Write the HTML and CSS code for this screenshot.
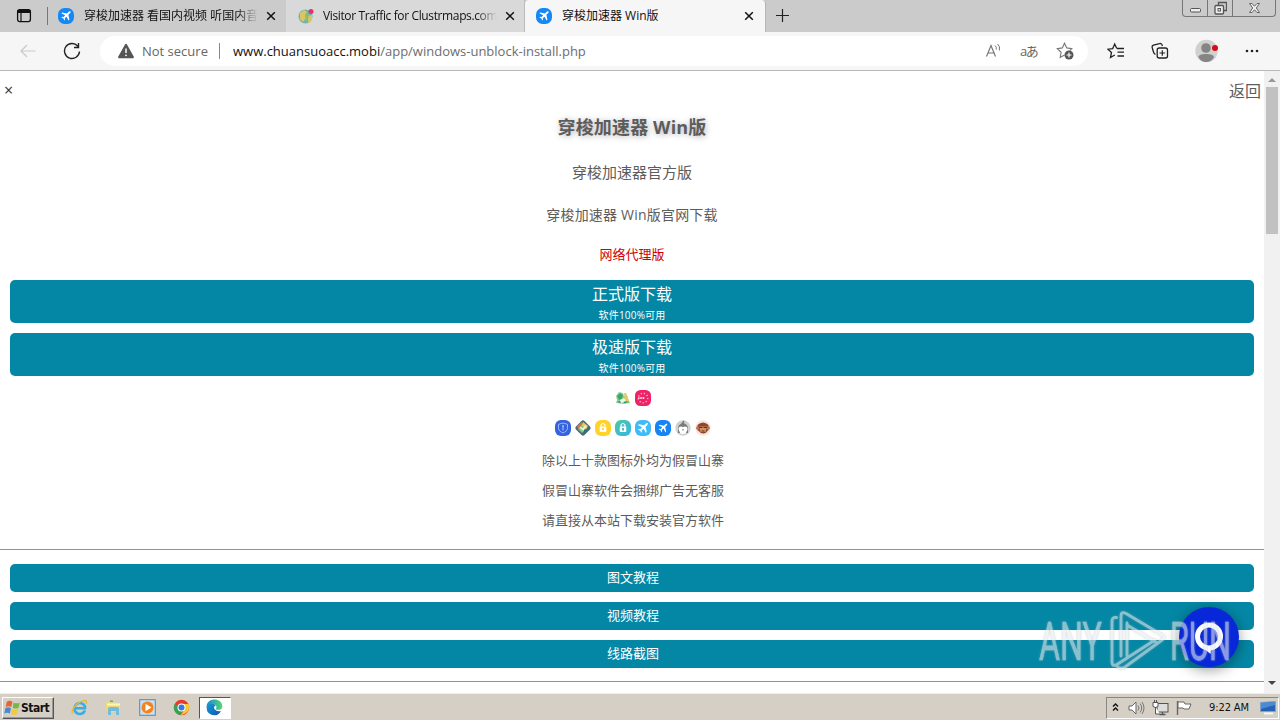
FILE: index.html
```html
<!DOCTYPE html>
<html lang="zh-CN">
  <head>
    <meta charset="UTF-8" />
    <meta name="viewport" content="width=device-width, initial-scale=1.0" />
    <title>穿梭加速器 Win版</title>
    <link rel="stylesheet" href="styles.css">
  </head>
  <body>
    <!-- Gradients and icons used more than once -->
    <svg class="defs" width="0" height="0">
      <defs>
        <linearGradient id="edge-blue" x1="0" y1="0" x2="1" y2="1">
          <stop offset="0" stop-color="#189bd8" />
          <stop offset="1" stop-color="#0b58ad" />
        </linearGradient>
        <linearGradient id="edge-top" x1="0" y1="0" x2="1" y2="0">
          <stop offset="0" stop-color="#1789d6" />
          <stop offset="1" stop-color="#55d76f" />
        </linearGradient>
        <linearGradient id="lock-teal" x1="0" y1="0" x2="1" y2="1">
          <stop offset="0" stop-color="#4cc7a0" />
          <stop offset="1" stop-color="#35b5ee" />
        </linearGradient>
        <symbol id="plane" viewBox="0 0 16 16">
          <path d="M13.6 2.4c-1-.5-2 .1-2.8.9L9.200 4.900 3.300 3.600l-1 1 4.700 2.500-2 2.200-1.900-.3-.8.8 2.500 1.200 1.200 2.500.8-.8-.3-1.900 2.200-2 2.500 4.700 1-1-1.300-5.900 1.600-1.600c.8-.8 1.500-1.800 1.100-2.600z" fill="#fff" />
        </symbol>
        <symbol id="close" viewBox="0 0 10 10">
          <path d="M1.200 1.200l7.600 7.600M8.800 1.200L1.200 8.800" fill="none" stroke="currentColor" stroke-width="1.500" />
        </symbol>
      </defs>
    </svg>

    <div class="tab-bar">
      <div class="tab-menu">
        <svg width="16" height="16" viewBox="0 0 16 16">
          <rect x="1.600" y="2.600" width="12.800" height="12" rx="2" fill="none" stroke="#111" stroke-width="1.300" />
          <path d="M1.500 3h13v3h-13z" fill="#111" />
          <path d="M5 5v9.500" stroke="#111" stroke-width="1.200" />
        </svg>
      </div>
      <div class="tab first">
        <svg class="favicon" width="16" height="16" viewBox="0 0 16 16"><rect width="16" height="16" rx="6.500" fill="#1688f5" /><use href="#plane" x="1.500" y="1.500" width="13" height="13" /></svg>
        <span class="tab-title faded">穿梭加速器 看国内视频 听国内音</span>
        <svg class="tab-close" width="10" height="10"><use href="#close" /></svg>
      </div>
      <div class="tab second">
        <svg class="favicon" width="16" height="16" viewBox="0 0 16 16">
          <circle cx="7.500" cy="8.500" r="7" fill="#6fb3bd" />
          <path d="M2 5l4-3 3 2-2 3 1 3-3 4-3-3zM10 8l4-1v5l-4 3z" fill="#dcc65c" />
          <path d="M8 6l3 1-1 5-3 1z" fill="#8fbd68" />
          <circle cx="13" cy="3.500" r="2.500" fill="#e53260" />
        </svg>
        <span class="tab-title latin faded">Visitor Traffic for Clustrmaps.com</span>
        <svg class="tab-close" width="10" height="10"><use href="#close" /></svg>
      </div>
      <div class="tab active">
        <svg class="favicon" width="16" height="16" viewBox="0 0 16 16"><rect width="16" height="16" rx="6.500" fill="#1688f5" /><use href="#plane" x="1.500" y="1.500" width="13" height="13" /></svg>
        <span class="tab-title">穿梭加速器 Win版</span>
        <svg class="tab-close" width="10" height="10"><use href="#close" /></svg>
      </div>
      <div class="new-tab">
        <svg width="15" height="15" viewBox="0 0 15 15"><path d="M7.500 1v13M1 7.500h13" stroke="#222" stroke-width="1.200" /></svg>
      </div>
      <div class="window-buttons">
        <span><svg width="13" height="16" viewBox="0 0 13 16"><rect x="1.500" y="8.500" width="10" height="3.500" rx="1" fill="#eee" stroke="#555" /></svg></span>
        <span><svg width="13" height="16" viewBox="0 0 13 16"><path d="M4.500 5V2.500h8v8H10" fill="none" stroke="#555" stroke-width="1.300" /><rect x="1" y="5.500" width="8.500" height="8.500" rx="1" fill="#eee" stroke="#555" stroke-width="1.300" /><rect x="4" y="8.500" width="2.500" height="2.500" fill="none" stroke="#555" /></svg></span>
        <span class="wide"><svg width="13" height="16" viewBox="0 0 13 16"><path d="M1.500 3.500H4l2.500 2.700L9 3.500h2.500L8.300 8l3.200 4.500H9L6.500 9.800 4 12.500H1.500L4.700 8z" fill="#eee" stroke="#666" /></svg></span>
      </div>
    </div>

    <div class="toolbar">
      <svg class="back" width="16" height="14" viewBox="0 0 16 14"><path d="M15.500 7H1M7 1L1 7l6 6" fill="none" stroke="#c9c9c9" stroke-width="1.200" /></svg>
      <svg class="reload" width="18" height="18" viewBox="0 0 18 18"><path d="M16.500 9.500A7.500 7.500 0 1 1 14.800 4.200M15.500 1v4.500H11" fill="none" stroke="#222" stroke-width="1.400" /></svg>
      <div class="address">
        <svg width="16" height="16" viewBox="0 0 16 16"><path d="M8 .8c.5 0 .8.3 1 .6l6.700 12.200c.4.800 0 1.600-1 1.600H1.300c-1 0-1.400-.8-1-1.600L7 1.400c.2-.3.500-.6 1-.6z" fill="#555" /><path d="M8 5.500V10" stroke="#fff" stroke-width="1.500" /><circle cx="8" cy="12.300" r=".9" fill="#fff" /></svg>
        <span class="not-secure">Not secure</span>
        <span class="divider"></span>
        <span class="url">www.chuansuoacc.mobi<span class="path">/app/windows-unblock-install.php</span></span>
        <div class="address-icons">
          <svg width="18" height="18" viewBox="0 0 18 18"><path d="M2.500 14.500L7 3.500l4.500 11M4 11h6" fill="none" stroke="#777" stroke-width="1.200" /><path d="M11 3.500q2 1.500 1.200 4M13.500 2q3.200 2.700 1.800 6.500" fill="none" stroke="#777" /></svg>
          <span class="translate">aあ</span>
          <svg width="18" height="18" viewBox="0 0 18 18"><path d="M8.500 13l-4.300 2.400.9-5.100L1.300 6.700l5-.8L8.500 1.200l2.300 4.700 5 .8-2 2" fill="none" stroke="#777" stroke-width="1.100" /><circle cx="13" cy="13" r="4.500" fill="#555" /><path d="M13 10.500v5M10.500 13h5" stroke="#fff" stroke-width="1.100" /></svg>
        </div>
      </div>
      <div class="toolbar-icons">
        <svg width="18" height="18" viewBox="0 0 18 18"><path d="M9.800 6.500L7.700 2 5.700 6.600l-4.900.6 3.700 3.300-1 5L7.800 13M10 6.500h7M10.500 10.200H17M10.500 14H17" fill="none" stroke="#222" stroke-width="1.300" /></svg>
        <svg width="18" height="18" viewBox="0 0 18 18"><path d="M4.500 12.500C3 12 2.700 11 2.300 9.500L1.200 5.500c-.3-1.200.2-2 1.300-2.300l6-1.600c1.300-.4 2.300.3 2.600 1.400l.3 1" fill="none" stroke="#222" stroke-width="1.300" /><rect x="6.200" y="6" width="10.300" height="10" rx="2" fill="none" stroke="#222" stroke-width="1.300" /><path d="M11.300 8.200v5.600M8.500 11h5.600" stroke="#222" stroke-width="1.200" /></svg>
        <svg class="profile" width="24" height="24" viewBox="0 0 24 24"><circle cx="11.500" cy="12" r="11.200" fill="#d0d0ce" /><circle cx="11" cy="9" r="4.800" fill="#858585" /><path d="M3.500 18c0-2 3-3 7.500-3s8 1 8 3.500c-2 3-5 4.500-8 4.500s-6.500-2-7.500-5z" fill="#858585" /><circle cx="20" cy="9" r="3" fill="#d90b19" /></svg>
        <svg class="more" width="14" height="4" viewBox="0 0 14 4"><circle cx="2" cy="2" r="1.300" /><circle cx="7" cy="2" r="1.300" /><circle cx="12" cy="2" r="1.300" /></svg>
      </div>
    </div>

    <div class="viewport">
      <main class="page">
        <div class="page-nav"><span class="page-close">×</span><span>返回</span></div>
        <h1>穿梭加速器 Win版</h1>
        <p class="subtitle">穿梭加速器官方版</p>
        <p class="description">穿梭加速器 Win版官网下载</p>
        <p class="edition">网络代理版</p>
        <div class="download">正式版下载<small>软件100%可用</small></div>
        <div class="download">极速版下载<small>软件100%可用</small></div>

        <div class="app-icons">
          <svg viewBox="0 0 16 16"><path d="M1 13l1-3-1-4 3-4 4 1 1 3 3-1 1 4 2 4-6 1z" fill="#8ed09a" /><path d="M2 6l3-3 3 2-1 4-3 1z" fill="#3da866" /><path d="M9 3l2 0 2 5 1 3-4 1z" fill="#e6ca5b" /><path d="M9 11l5 1-5 1zM2 12l3-1 1 2z" fill="#198e61" /><path d="M5 10l4-2 2 3-5 2z" fill="#eef8ec" /></svg>
          <svg viewBox="0 0 16 16"><rect width="16" height="16" rx="5.500" fill="#ef2167" /><path d="M3.500 9V7.500M6 9V7M8.500 9V7M3.500 8h6" stroke="#ffd4e2" /><circle cx="8" cy="8" r="4.700" fill="none" stroke="#ffb0cc" stroke-width="1.500" stroke-dasharray="1.200 2" /></svg>
        </div>
        <div class="app-icons">
          <svg viewBox="0 0 16 16"><rect width="16" height="16" rx="6" fill="#3562df" /><path d="M8 3l4.500 1.300v3.500c0 2.500-2 4.200-4.500 5.200-2.500-1-4.500-2.700-4.500-5.200V4.300z" fill="none" stroke="#9db8ff" /><path d="M8 5.500v5M7 6h2" stroke="#b5caff" /></svg>
          <svg viewBox="0 0 16 16"><path d="M8 3l5 5-5 5-5-5z" fill="#4f6a70" stroke="#4f6a70" stroke-width="5" stroke-linejoin="round" /><path d="M2 6l5-4 1 4-5 3z" fill="#df6b53" /><path d="M8 2l5 4-2 4-5-3z" fill="#e1ce58" /><path d="M3 9l4-4 3 5-3 3z" fill="#83c979" /><path d="M9 10l5-2-5 6z" fill="#2b6d8c" /><path d="M5 7l3 2.500 3-4" fill="none" stroke="#eff6dd" stroke-width="1.600" /></svg>
          <svg viewBox="0 0 16 16"><rect width="16" height="16" rx="6" fill="#ffd329" /><rect x="4.700" y="6.500" width="6.600" height="5.500" rx="1" fill="#fff" /><path d="M6 7V5q2-3 4 0v1" fill="none" stroke="#fff" stroke-width="1.200" /><circle cx="8" cy="9" r="1" fill="#ffc524" /></svg>
          <svg viewBox="0 0 16 16"><rect width="16" height="16" rx="6" fill="url(#lock-teal)" /><rect x="4.700" y="6.500" width="6.600" height="5.500" rx="1" fill="#fff" /><path d="M6 7V5q2-3 4 0v2" fill="none" stroke="#fff" stroke-width="1.200" /><path d="M8 8v2.500" stroke="#239e9b" stroke-width="1.500" /></svg>
          <svg viewBox="0 0 16 16"><rect width="16" height="16" rx="6" fill="#42baf7" /><use href="#plane" x="1" y="1" width="14" height="14" /></svg>
          <svg viewBox="0 0 16 16"><rect width="16" height="16" rx="6" fill="#1684f4" /><use href="#plane" x="2" y="2" width="12" height="12" /></svg>
          <svg viewBox="0 0 16 16"><circle cx="8" cy="8" r="7.700" fill="#d0d2d2" /><path d="M3 9q0-5 5-6 5 1 5 6v4H3z" fill="#777c7d" /><path d="M7 4l2-3" stroke="#777" stroke-width="1.500" /><circle cx="6" cy="9" r="2.500" fill="#fff" /><circle cx="10" cy="9" r="2.500" fill="#fff" /><path d="M4 10h8l-1 3q-3 2-6 0z" fill="#fff" /><path d="M7 9.800h2" stroke="#888" /></svg>
          <svg viewBox="0 0 16 16"><circle cx="8" cy="8" r="7.700" fill="#fae4da" /><path d="M2.500 5Q8 0 13.500 5v5q-5 7-11 0z" fill="#88472f" /><circle cx="2.700" cy="8" r="1.700" fill="#b27657" /><circle cx="13.300" cy="8" r="1.700" fill="#b27657" /><path d="M4 6.500h8l-1.500 5.500h-5z" fill="#d98e65" /><path d="M4 7.500h3.500M8.500 7.500H12M6.500 11h3" stroke="#56322a" stroke-width="1.200" /></svg>
        </div>

        <p class="notice first">除以上十款图标外均为假冒山寨</p>
        <p class="notice">假冒山寨软件会捆绑广告无客服</p>
        <p class="notice">请直接从本站下载安装官方软件</p>
        <hr>
        <div class="guide">图文教程</div>
        <div class="guide">视频教程</div>
        <div class="guide">线路截图</div>
        <hr>
      </main>

      <div class="scrollbar">
        <span class="arrow-up"></span>
        <span class="thumb"></span>
        <span class="arrow-down"></span>
      </div>

      <div class="chat-button">
        <svg width="32" height="36" viewBox="0 0 32 36"><circle cx="16" cy="17.500" r="11.500" fill="none" stroke="#fff" stroke-width="5" /><path d="M8 27l9.500 8 1-8z" fill="#fff" /></svg>
      </div>
      <svg class="watermark" width="220" height="72" viewBox="0 0 220 72">
        <text x="2" y="52" textLength="63" lengthAdjust="spacingAndGlyphs">ANY</text>
        <text x="133" y="52" textLength="61" lengthAdjust="spacingAndGlyphs">RUN</text>
        <g fill="none" stroke-linejoin="round" stroke-linecap="round">
          <path d="M79.500 9.500Q75 9 75 13v41q0 5 5 2.500L118 32M84 48V8q0-5 5-2.500L125 27q4 2.500 0 5L88 59q-4 2.500-8-.5M90 15v33M90 17l30 18" />
        </g>
      </svg>
    </div>

    <div class="taskbar">
      <div class="start">
        <svg width="18" height="18" viewBox="0 0 16 16"><path d="M2.500 2.500q2.500-1.700 5 0l-1 4.700q-2.500-1.500-5 0z" fill="#e66631" /><path d="M8.500 3q2.500 1.500 5.500 0l-1 4.700q-2.500 1.500-5.300 0z" fill="#79b744" /><path d="M1.200 8.200q2.500-1.700 5 0l-1 4.700q-2.500-1.500-5 0z" fill="#4b8bcd" /><path d="M7.300 8.700q2.500 1.500 5.400 0l-1 4.700q-2.700 1.500-5.400 0z" fill="#f2ca42" /></svg>
        <span>Start</span>
      </div>
      <div class="launchers">
        <svg width="17" height="17" viewBox="0 0 17 17"><path d="M14 11.500A5.500 5.500 0 1 1 14 7.500v1.700H4" fill="none" stroke="#37aee5" stroke-width="2.600" /><path d="M1.500 14.500C-.5 10 7 2.500 13.500 1.500q3 0 1.500 3.500" fill="none" stroke="#e9b935" stroke-width="1.300" /></svg>
        <svg width="17" height="17" viewBox="0 0 17 17"><path d="M1 4l2-2h5l1 2h6v9H1z" fill="#edd77b" /><path d="M2 5.500h13" stroke="#fff5b5" stroke-width="2" /><path d="M3 10q0-2 2-2h7q2 0 2 2v6h-3v-4H6v4H3z" fill="#72bddd" /><path d="M5 2l3 .3" stroke="#4fad79" stroke-width="1.300" /></svg>
        <svg width="17" height="17" viewBox="0 0 17 17"><rect x=".7" y=".7" width="15.600" height="15.600" fill="#c7dff2" stroke="#4e8bbd" /><circle cx="8.500" cy="8.500" r="6" fill="#f58317" /><path d="M6.500 4.700l6 3.800-6 3.800z" fill="#fff" /></svg>
        <svg width="17" height="17" viewBox="0 0 17 17"><circle cx="8.500" cy="8.500" r="7.700" fill="#e43d30" /><path d="M8.500 8.500L1.700 4.900A7.700 7.700 0 0 0 7.500 16.100l4-6z" fill="#31a552" /><path d="M8.500 5h7q3 9-8 11.200l4.500-6.200z" fill="#f8c92f" /><circle cx="8.500" cy="8.500" r="4" fill="#fff" /><circle cx="8.500" cy="8.500" r="3" fill="#387be0" /></svg>
      </div>
      <div class="running">
        <svg width="17" height="17" viewBox="0 0 17 17"><path d="M.5 8Q1 4 6 4l4 2q-3 2-1.500 4 2 3 6.500 2-2 4-6 4.300Q.5 16 .5 8z" fill="url(#edge-blue)" /><path d="M.6 7C2-2 16-1 16.300 7c0 3-2 4.200-5 3.800-1.300-.2-1.800-.7-1-1.700C11.500 4.500 5 3 .6 7z" fill="url(#edge-top)" /></svg>
      </div>
      <div class="tray">
        <svg class="expand" width="7" height="12" viewBox="0 0 7 12"><path d="M1 4.500l2.500-2.500L6 4.500M1 8.500L3.500 6 6 8.500" fill="none" stroke="#111" stroke-width="1.400" /></svg>
        <svg width="17" height="16" viewBox="0 0 17 16"><path d="M1 6h3l4-4v12l-4-4H1z" fill="#fff" stroke="#666" /><path d="M10 5.500q2 2.500 0 5M12 3.500q3.500 4.500 0 9M14 2q4 6 0 12" fill="none" stroke="#777" /></svg>
        <svg width="17" height="16" viewBox="0 0 17 16"><rect x="5" y="3.500" width="11" height="8.500" fill="#ddd" stroke="#555" /><path d="M7.500 14.500h6M10.500 12v2" stroke="#555" stroke-width="1.300" /><path d="M1 2.500h5v4q-2.500 2-5 0zM2.500 0v3M4.500 0v3M3.500 7v7H8" fill="#fff" stroke="#555" /></svg>
        <svg width="17" height="16" viewBox="0 0 17 16"><path d="M1.500 1v14" stroke="#666" stroke-width="1.400" /><path d="M2 2h6l1 2h6l-2 5H8L7 8H2z" fill="#fff" stroke="#666" /></svg>
        <span class="clock">9:22 AM</span>
        <svg class="desktop" width="16" height="15" viewBox="0 0 16 15"><path d="M.5 2.500l15-1v10H.5z" fill="#2661b2" stroke="#7ba6d1" /><path d="M1 3l14-1v3L1 9z" fill="#4d8bd1" /><path d="M4 13.500h9" stroke="#f5f5f5" stroke-width="2" /></svg>
      </div>
    </div>
  </body>
</html>
```

FILE: styles.css
```css
:root {
  --teal: #0487a5;
  --page-text: #5c5c5c;
  --tab-bar: #cbcbcb;
  --toolbar: #f6f6f6;
  --taskbar: #d6cfc6;
}

* {
  margin: 0;
  padding: 0;
  box-sizing: border-box;
}

body {
  width: 1280px;
  height: 720px;
  display: flex;
  flex-direction: column;
  overflow: hidden;
  font-family: "Open Sans", "Noto Sans CJK SC", sans-serif;
  background-color: white;
}

svg {
  display: block;
  flex-shrink: 0;
}

.defs {
  position: absolute;
}

/* Browser tabs */
.tab-bar {
  height: 32px;
  flex-shrink: 0;
  display: flex;
  background-color: var(--tab-bar);
  color: #111;
}

.tab-menu {
  width: 48px;
  height: 18px;
  margin-top: 7px;
  padding-left: 16px;
  border-right: 1px solid #777;
}

.tab {
  height: 32px;
  display: flex;
  align-items: center;
  padding-left: 10px;
}

.tab.first {
  width: 238px;
}

.tab.second {
  width: 239px;
  padding-left: 12px;
  background-color: #d9d9d9;
  border-right: 1px solid #bbb;
}

.tab.active {
  width: 241px;
  padding-left: 11px;
  background-color: var(--toolbar);
  border-right: 1px solid #b5b5b5;
  border-radius: 4px 4px 0 0;
}

.tab-title {
  width: 174px;
  margin-left: 10px;
  overflow: hidden;
  white-space: nowrap;
  font-size: 12px;
  line-height: 20px;
}

.second .tab-title {
  margin-left: 9px;
}

.latin {
  letter-spacing: -0.37px;
}

.faded {
  mask-image: linear-gradient(to right, #000 88%, transparent);
}

.tab-close {
  margin-left: 8px;
}

.new-tab {
  padding: 8px 0 0 9px;
}

.window-buttons {
  height: 17px;
  margin: 0 4px 0 auto;
  display: flex;
  border: 1px solid #777;
  border-top: none;
  border-radius: 0 0 4px 4px;
}

.window-buttons span {
  width: 25px;
  display: flex;
  justify-content: center;
  border-right: 1px solid #777;
}

.window-buttons .wide {
  width: 42px;
  border-right: none;
}

/* Address bar */
.toolbar {
  height: 39px;
  flex-shrink: 0;
  display: flex;
  align-items: center;
  padding-left: 20px;
  background-color: var(--toolbar);
  border-bottom: 1px solid #b9b9b9;
}

.reload {
  margin-left: 27px;
}

.address {
  width: 988px;
  height: 30px;
  margin-left: 19px;
  padding: 0 14px 0 18px;
  display: flex;
  align-items: center;
  border-radius: 15px;
  background-color: white;
  font-size: 13px;
  color: #111;
}

.not-secure {
  width: 67px;
  margin-left: 8px;
  color: #666;
  white-space: nowrap;
}

.divider {
  width: 1px;
  height: 16px;
  margin: 0 13px 0 10px;
  background-color: #888;
}

.url {
  white-space: nowrap;
}

.path {
  color: #6d6d6d;
}

.address-icons {
  margin-left: auto;
  display: flex;
  align-items: center;
  gap: 18px;
}

.translate {
  width: 18px;
  color: #666;
  font-size: 13px;
  letter-spacing: -1.5px;
  line-height: 18px;
  white-space: nowrap;
}

.toolbar-icons {
  display: flex;
  align-items: center;
  margin-left: 19px;
  gap: 26px;
}

.more {
  fill: #222;
}

/* Web page */
.viewport {
  height: 622px;
  flex-shrink: 0;
  display: flex;
  position: relative;
  overflow: hidden;
}

.page {
  width: 1264px;
  color: var(--page-text);
  text-align: center;
}

.page-nav {
  height: 39px;
  padding: 0 3px 2px 4px;
  display: flex;
  align-items: center;
  justify-content: space-between;
  font-size: 16px;
}

.page-close {
  color: #333;
}

h1 {
  height: 34px;
  line-height: 34px;
  font-size: 18px;
  letter-spacing: 0.15px;
  text-shadow: 1px 1px 6px rgba(0, 0, 0, 0.3);
}

.page p {
  height: 30px;
  line-height: 30px;
}

.page .subtitle {
  margin-top: 13px;
  font-size: 15px;
}

.page .description {
  margin-top: 13px;
  font-size: 14px;
  letter-spacing: 0.2px;
}

.page .edition {
  margin-top: 10px;
  font-size: 13px;
  line-height: 28px;
  color: #d00000;
}

.download {
  height: 43px;
  margin: 10px 10px 0;
  border-radius: 5px;
  background-color: var(--teal);
  color: white;
  font-size: 16px;
  line-height: 29px;
}

.download small {
  display: block;
  font-size: 10px;
  line-height: 12px;
  letter-spacing: 0.2px;
}

.app-icons {
  height: 16px;
  margin-top: 14px;
  padding-left: 2px;
  display: flex;
  justify-content: center;
  gap: 4px;
}

.app-icons svg {
  width: 16px;
  height: 16px;
}

.page .notice {
  padding-left: 2px;
  font-size: 13px;
  line-height: 28px;
}

.page .notice.first {
  margin-top: 10px;
}

hr {
  height: 1px;
  margin: 13px 0 14px;
  border: none;
  background-color: #929292;
}

.guide {
  height: 28px;
  margin: 0 10px 10px;
  padding-left: 2px;
  border-radius: 5px;
  background-color: var(--teal);
  color: white;
  font-size: 13px;
  line-height: 27px;
}

.scrollbar {
  width: 16px;
  display: flex;
  flex-direction: column;
  align-items: center;
  background-color: #f1f1f1;
}

.arrow-up,
.arrow-down {
  border: 4px solid transparent;
}

.arrow-up {
  margin-top: 3px;
  border-bottom-color: #999;
}

.thumb {
  width: 12px;
  height: 147px;
  margin-top: 5px;
  background-color: #c1c1c1;
}

.arrow-down {
  margin: auto 0 4px;
  border-top-color: #444;
}

/* Floating support button */
.chat-button {
  position: absolute;
  left: 1179px;
  top: 536px;
  width: 60px;
  height: 60px;
  display: flex;
  align-items: center;
  justify-content: center;
  border-radius: 50%;
  background-color: #0727d9;
  box-shadow: 0 3px 14px rgba(0, 0, 0, 0.4);
}

.watermark {
  position: absolute;
  left: 1037px;
  top: 537px;
  opacity: 0.58;
  filter: drop-shadow(0 0 1px #aaa);
}

.watermark text {
  fill: #e7edf0;
  stroke: #e7edf0;
  stroke-width: 0.4px;
  font-family: Roboto, sans-serif;
  font-size: 53px;
  font-weight: 400;
}

.watermark path {
  stroke: #e7edf0;
  stroke-width: 2.8;
}

/* Desktop taskbar */
.taskbar {
  height: 27px;
  flex-shrink: 0;
  display: flex;
  align-items: center;
  padding: 2px 1px 1px 2px;
  background-color: var(--taskbar);
  border-top: 1px solid #eee;
  color: #111;
  font-family: "DejaVu Sans Condensed", "DejaVu Sans", sans-serif;
}

.start {
  width: 52px;
  height: 22px;
  display: flex;
  align-items: center;
  padding-left: 1px;
  border: 1px solid;
  border-color: #fff #555 #555 #fff;
  box-shadow: inset -1px -1px #999;
  font-size: 12px;
  font-weight: bold;
}

.start span {
  margin-left: -1px;
  letter-spacing: -0.5px;
}

.launchers {
  display: flex;
  gap: 17px;
  margin-left: 17px;
}

.running {
  width: 32px;
  height: 22px;
  display: flex;
  align-items: center;
  justify-content: center;
  margin-left: 9px;
  padding-right: 1px;
  border: 1px solid;
  border-color: #555 #fff #fff #555;
  background-color: white;
}

.tray {
  width: 173px;
  height: 22px;
  display: flex;
  align-items: center;
  gap: 7px;
  margin-left: auto;
  padding-left: 5px;
  border: 1px solid;
  border-color: #888 #fff #fff #888;
  font-size: 11px;
}

.expand {
  margin-right: 2px;
}

.clock {
  width: 41px;
  margin-left: 9px;
  white-space: nowrap;
  letter-spacing: -0.1px;
}

.desktop {
  margin-left: 3px;
}
```
